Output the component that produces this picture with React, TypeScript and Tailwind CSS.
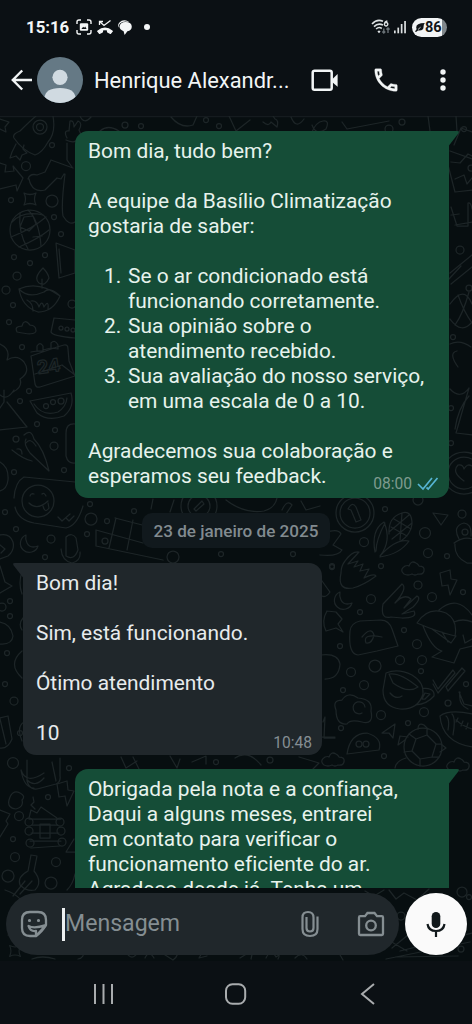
import type { ReactNode } from "react";

function Star({ x, y, s = 1 }: { x: number; y: number; s?: number }) {
  return <path transform={`translate(${x} ${y}) scale(${s})`} d="M-6-6Q0-3 6-6Q3 0 6 6Q0 3-6 6Q-3 0-6-6Z" />;
}
function Cloud({ x, y }: { x: number; y: number }) {
  return <path transform={`translate(${x} ${y})`} d="M-9 5Q-14 1-8-3Q-5-4-4-3Q-2-9 3-6Q5-5 6-3Q12-3 11 2Q10 6 5 5Q2 7-1 5Q-5 7-9 5Z" />;
}
function Moon({ x, y }: { x: number; y: number }) {
  return <path transform={`translate(${x} ${y})`} d="M-3-8A9 9 0 1 0 9 3Q1 6-2 0Q-4-4-3-8Z" />;
}
function Bolt({ x, y }: { x: number; y: number }) {
  return <path transform={`translate(${x} ${y})`} d="M-8-9L2-12L3-3L9-2L2 13L0 3L-6 4Z" />;
}

const bubbles: [number, number, number][] = [
  [52, 145, 2.5], [26, 166, 4.5], [52, 201, 6], [11, 200, 2.5], [54, 217, 2.5], [61, 234, 2.5], [14, 257, 2.5], [45, 255, 2.5],
  [30, 263, 2.5], [17, 276, 4], [6, 290, 4], [13, 305, 2.5], [9, 322, 2.5], [22, 347, 2.5], [72, 304, 4], [29, 391, 2.5],
  [20, 401, 2.5], [37, 424, 2.5], [55, 430, 2.5], [54, 446, 4], [16, 439, 3], [14, 472, 2.5], [64, 470, 2.5],
  [5, 512, 2.5], [90, 504, 2.5], [91, 519, 6], [107, 521, 2.5], [51, 539, 4], [87, 534, 2.5], [16, 529, 2.5], [45, 557, 2.5],
  [2, 607, 4], [10, 601, 2.5], [10, 616, 2.5], [7, 653, 2.5], [5, 684, 2.5], [14, 701, 4], [20, 733, 2.5], [13, 763, 5.5],
  [69, 768, 2.5], [19, 816, 4.5], [48, 797, 2.5], [13, 839, 2.5], [15, 857, 4.5], [8, 876, 6], [51, 883, 6], [56, 862, 4.5],
  [418, 500, 5], [385, 509, 2.5], [462, 514, 4], [425, 533, 5.5], [364, 542, 4.5], [428, 553, 4.5], [447, 556, 2.5], [332, 567, 2.5],
  [381, 566, 2.5], [418, 585, 4], [371, 599, 4.5], [432, 597, 4.5], [463, 592, 2.5], [360, 612, 2.5], [404, 630, 2.5], [417, 644, 4.5],
  [340, 646, 2.5], [351, 672, 4.5], [375, 666, 6], [400, 660, 4.5], [422, 660, 4.5], [421, 671, 2.5], [364, 685, 4.5], [343, 690, 2.5],
  [448, 703, 3], [466, 684, 2.5], [381, 715, 4.5], [424, 712, 4.5], [341, 728, 2.5], [408, 723, 2.5], [384, 756, 2.5],
  [125, 125, 3], [141, 126, 2.5], [206, 120, 2.5], [219, 126, 2.5], [389, 129, 4], [402, 122, 3], [464, 129, 2.5], [471, 168, 3],
  [460, 250, 4], [469, 288, 3], [453, 337, 2.5], [451, 408, 2.5], [451, 443, 2.5], [134, 511, 2.5], [173, 557, 6], [221, 554, 2.5],
  [293, 554, 2.5], [332, 566, 2.5], [216, 762, 2.5], [270, 760, 3], [462, 892, 5], [401, 916, 4], [461, 949, 3], [469, 897, 2.5],
];

function Wallpaper() {
  return (
    <svg className="absolute inset-0 h-[845px] w-[472px]" viewBox="0 116 472 845" fill="none" stroke="#1d2527" strokeWidth="1.25" strokeLinejoin="round" strokeLinecap="round">
      <path d="M0 116.5H472" stroke="#151b1f" />
      {bubbles.map(([x, y, r], i) => <circle key={i} cx={x} cy={y} r={r} />)}
      <path d="M0 119L9 122L5 127L6 132L0 129M53 116Q56 133 48 142Q42 153 35 155Q22 150 14 138Q12 134 20 131Q30 121 36 116" />
      <circle cx="40" cy="127" r="7" /><circle cx="40" cy="127" r="3.5" />
      <path d="M16 144L12 152L10 158L16 156L20 160L22 155L27 153L23 149L24 145M67 138Q63 130 69 131L70 121Q74 120 74 127L78 121Q83 123 79 130L82 137M66 140Q75 144 78 139M67 143V160L72 167" />
      <path d="M0 163L6 165L5 172L14 171L13 166L23 178L17 191L16 185L0 189M28 179Q30 173 37 175L45 172L51 160L73 168M29 179Q32 193 45 190L57 178L61 179L64 174M65 174Q61 206 63 216Q69 226 75 222" />
      <Star x={30} y={199} />
      <circle cx="30" cy="230" r="20" />
      <path d="M12 222Q23 210 43 215M11 237Q32 229 46 217M19 247Q38 239 49 230M20 213Q18 233 28 249M28 210Q39 220 41 246M24 217L33 216L36 224L29 231L20 227ZM33 237L42 236" />
      <path d="M56 243L75 250V273L59 278ZM59 249L61 273M43 268Q33 278 39 283Q45 287 49 278Q48 273 43 268ZM42 279V288M19 289Q38 280 60 296Q53 312 38 312Q22 307 19 289ZM19 289Q28 299 44 292M44 292Q50 286 60 296M27 300Q33 303 33 311M31 301Q37 300 39 307Q42 299 44 307Q49 299 48 309" />
      <path d="M17 332Q14 326 22 326Q24 318 30 325Q36 325 36 331Q35 336 17 332ZM75 320L54 318L51 332Q52 336 75 338" />
      <circle cx="61" cy="328" r="2" /><circle cx="67" cy="329" r="2" /><circle cx="73" cy="330" r="2" />
      <path d="M31 352L37 351M43 350L51 348M57 347L64 345Q68 344 68 349L69 361L75 376L40 387Q36 388 35 384L31 356ZM37 351V346Q40 341 43 346V351ZM51 348V343Q55 339 58 345V349ZM35 374L62 365L75 375" />
      <text x="38" y="374" fontFamily="Inter" fontSize="18" fontWeight="700" transform="rotate(-8 38 374)">24</text>
      <path d="M0 344Q11 349 7 360Q17 354 24 362Q31 372 20 379Q23 387 13 392M0 395Q7 401 14 390M4 390V402L0 408M7 402L27 427L0 430" />
      <path d="M30 401L71 393Q75 407 64 416Q48 422 37 413ZM34 404Q43 417 58 412Q66 407 67 398" />
      <circle cx="46" cy="406" r="2.5" /><circle cx="53" cy="402" r="2.5" /><circle cx="61" cy="401" r="3" />
      <path d="M24 435Q31 428 34 439Q44 449 49 471L30 453Q23 443 26 439M12 450Q23 459 32 461M17 449Q22 448 22 454M26 443Q30 437 36 446M75 424Q66 423 66 433V456Q68 464 75 463" />
      <path d="M0 462Q9 467 8 480Q7 489 0 491M14 498Q15 482 24 477L75 482M15 507Q18 520 34 523L66 528Q77 526 83 506" />
      <circle cx="38" cy="501" r="16" /><path d="M30 496Q31 493 34 494M42 494Q44 492 46 496M29 503Q37 511 48 501M43 506Q45 514 49 508L48 503M58 517L62 521L70 514M66 518L69 521L74 516" />
      <path d="M0 535Q10 533 13 542Q15 550 8 556L0 559M0 545L5 549L1 553M66 537Q72 532 76 538L78 550Q74 561 66 556ZM61 549Q62 561 72 563Q81 561 80 552M0 566L5 582L12 586L0 593" /><Moon x={29} y={543} />
      <path d="M96 530L143 543M116 518L109 548M133 520L127 550M115 518L150 527M96 530L96 546L163 560M151 509L153 499M170 512L174 500" />
      <circle cx="105" cy="541" r="3" /><circle cx="199" cy="506" r="18" /><circle cx="199" cy="506" r="11" /><path d="M194 509L202 501L204 504L196 511ZM226 500Q244 514 264 511Q275 508 277 498M282 510Q287 499 292 505L286 514M301 501L306 510L320 506" />
      <path d="M22 572Q18 583 22 594M23 618Q18 624 22 630M0 622Q11 624 13 636Q12 645 0 644M22 651Q7 664 22 678M0 718L8 716L12 739Q8 749 0 748M0 719L6 744M24 722Q16 727 22 741" />
      <path d="M27 760V781Q30 792 41 788L56 784Q61 782 60 776V758M27 780Q35 788 44 778M21 770Q26 785 44 773M21 770Q24 788 34 788M52 762L56 781M9 800Q12 789 20 793Q26 796 22 800Q24 807 16 809Q7 808 9 800Z" />
      <Bolt x={65} y={793} />
      <path d="M0 810L10 814L6 821L8 824L0 837M33 797L34 802L31 805L35 809M29 818L31 810L37 813L41 807L57 818M29 819H61M32 825H58M31 833H59M30 841H61M31 848L60 846M40 824H50V838H40Z" />
      <circle cx="29" cy="822" r="4" /><circle cx="29" cy="831" r="4" /><circle cx="30" cy="843" r="4" /><circle cx="60" cy="822" r="4" /><circle cx="61" cy="831" r="4" /><circle cx="62" cy="842" r="4" />
      <path d="M74 839L66 852H75M31 855L37 856L34 871Q43 882 35 890Q27 892 20 885Q17 877 28 871ZM25 881L13 896M32 881L20 894M5 890Q24 896 28 915Q25 930 8 935M67 890Q73 884 75 874" />
      <path d="M313 568Q324 584 330 592Q326 598 322 596M325 533Q338 528 341 534L333 545L342 550Q338 557 320 555" />
      <circle cx="355" cy="513" r="19" /><circle cx="355" cy="513" r="15" /><path d="M348 509Q352 501 356 507L361 520L356 522L351 510Z" />
      <path d="M375 552Q371 530 384 522Q392 541 380 556Q396 538 409 541Q400 554 380 557M376 551Q376 540 385 523M389 534Q388 517 402 513Q412 510 412 524Q411 534 401 541M391 527L407 536M394 519L411 529M402 513L400 540M409 515L389 532M412 523L392 539" />
      <path d="M433 513L448 515L441 525ZM459 539Q452 526 464 523Q472 524 471 536M454 543Q464 536 472 539M455 544Q454 557 467 563L472 563" />
      <circle cx="465" cy="532" r="3" /><path d="M341 573Q337 591 353 588Q364 585 376 576Q374 573 364 578L369 569L360 571L363 564L354 567L358 561L348 564L359 552Q352 551 345 561Q341 566 341 573Z" />
      <Cloud x={413} y={569} /><Bolt x={448} y={582} /><Moon x={343} y={600} />
      <path d="M391 617Q380 620 383 604L402 584Q408 588 395 603Q404 593 411 599L404 608L417 596Q422 598 413 607L402 614L414 611Q418 618 402 618Z" />
      <path d="M327 611L336 612L342 619L338 624L343 632L336 628L326 631Q321 621 327 611M350 631Q351 623 360 621L381 620Q389 620 392 629L398 646L377 651L358 655Q348 654 350 631ZM362 637Q371 626 374 635Q372 644 366 643Q362 633 382 637" />
      <path d="M417 623Q428 606 446 613Q458 620 455 636Q438 632 417 623ZM439 610Q457 594 472 615M454 622Q463 618 472 622M423 626Q432 649 442 651L432 657L454 663L460 649L472 646M432 629L451 643L456 636M442 632L448 642M463 635L465 643L472 639" />
      <path d="M386 673Q398 668 412 675Q424 682 423 694Q418 710 400 709Q383 707 383 690ZM389 674Q400 672 418 687Q408 694 393 683ZM423 688Q435 688 434 696Q427 704 416 705M425 693L430 694L425 699L422 699ZM390 693Q396 700 402 696" />
      <path d="M433 680L438 689L453 670L455 673L438 693L433 684M446 687L462 668L465 671L448 691ZM321 655Q338 653 340 664Q339 679 325 679" />
      <path d="M336 710Q332 700 342 700Q348 691 358 698Q373 699 371 711Q374 725 362 722Q350 719 347 724Q336 725 336 710ZM365 707A6 6 0 1 0 362 713M347 754Q350 733 367 733Q383 738 379 750Z" />
      <circle cx="359" cy="744" r="3" /><circle cx="366" cy="744" r="3" /><path d="M323 722L325 717L324 738H335M382 733L395 724L393 738L389 733ZM322 737H335" />
      <Cloud x={333} y={760} /><Cloud x={458} y={765} />
      <circle cx="423" cy="747" r="19" /><path d="M416 739L427 735L436 744L432 757L420 759L412 751ZM427 728L427 735M441 744H436M439 757L432 757M420 766L420 759M404 752L412 751M409 734L416 739M418 729Q418 722 424 725L428 729M405 740L398 745L400 736L408 737M441 744L446 748L440 752M406 758Q396 761 395 768" />
      <path d="M440 716Q449 709 472 714M440 716Q442 742 472 747M446 716Q450 719 448 730M452 714Q456 718 453 735M456 720Q464 727 472 729M458 718L456 722M463 721L461 726M468 723L466 729M459 692L464 704L472 706M460 692Q458 705 468 709" />
      <path d="M451 162L460 163L468 154L472 156M450 151L472 159M454 145L461 128L472 132M428 116L430 131M456 116L457 131M448 165L455 192L472 190M455 179L464 175L467 184L472 178M451 207L457 226H468V203Q471 202 472 209M451 215L459 214M455 225L472 222M450 273L472 255M451 284L472 267M449 279L461 266" />
      <path d="M450 304Q464 284 472 304M450 319Q462 335 472 322M458 295Q464 312 472 323M469 292Q463 314 455 325M450 344Q460 339 471 347M458 367Q448 353 457 351M450 389Q460 400 469 388L456 433L472 435M469 396Q458 408 455 429" />
      <circle cx="464" cy="473" r="21" /><circle cx="464" cy="473" r="16" /><path d="M464 481Q451 472 458 465Q463 464 464 469Q467 463 472 466" />
      <path d="M80 116Q84 125 91 117M171 117Q181 129 193 125L197 116M229 116L236 131L250 120M263 122Q269 127 271 122L277 127Q279 120 275 119L273 116M291 117Q296 130 304 119M312 125Q316 136 326 129Q330 120 323 121Q316 122 312 132M342 122L347 129L389 121M100 131Q108 124 119 131" />
      <path d="M170 756L177 768L180 759M206 764V756L192 762M235 758Q248 749 261 765M299 757L319 763L313 769M121 757L126 768L137 761M133 757L139 769" />
      <path d="M389 890L396 899L404 893L417 900L429 889M365 891L374 896L384 890M400 951L472 933M386 959L470 942M395 957L458 956M390 941L407 951M408 935L392 948M240 958L253 950L251 959M266 958Q271 948 276 957Q281 953 278 959M295 958Q302 951 307 959M336 948L343 960M83 950Q85 958 78 959M126 952Q132 962 138 952M145 958Q149 949 154 958M162 953L173 960Q180 955 175 951M32 959Q42 955 55 959M203 951L199 958L207 956" />
      <Star x={15} y={951} s={0.9} />
    </svg>
  );
}

function StatusBar() {
  return (
    <div className="flex h-[54px] shrink-0 items-center justify-between pl-[26px] pr-[25px]">
      <div className="flex items-center text-[#f4f6f7]">
        <span className="w-[43px] whitespace-nowrap text-[16.8px] font-bold leading-5">15:16</span>
        <svg className="ml-[6px]" width="18" height="18" viewBox="0 0 18 18" fill="none" stroke="currentColor" strokeWidth="1.4">
          <path d="M2 6V4Q2 2 4 2H6M12 2H14Q16 2 16 4V6M16 12V14Q16 16 14 16H12M6 16H4Q2 16 2 14V12" />
          <rect x="4.8" y="5.2" width="8.4" height="7.6" rx="1.2" fill="currentColor" stroke="none" /><path d="M6.4 11L8.2 8.8L9.2 9.8L10.2 8.4L11.6 11Z" fill="#0b1014" stroke="none" />
        </svg>
        <svg className="ml-[3px]" width="18" height="18" viewBox="0 0 18 18" fill="none" stroke="currentColor" strokeWidth="1.3">
          <path d="M3.5 7V3.5H7M3.8 3.8L8 7.4L14.5 2.5" /><path d="M1.7 13.2Q9 7.2 16.3 13.2L14.5 15.3L11.6 13.8V11.9Q9 11.1 6.4 11.9V13.8L3.5 15.3Z" fill="currentColor" strokeLinejoin="round" />
        </svg>
        <svg className="ml-[3px]" width="16" height="17" viewBox="0 0 16 17" fill="currentColor">
          <path d="M1.8 8.4Q0.2 5.8 2.4 3.4Q6 0 11 2.2L12 3.1Q6 1.6 3 4.6Q1.4 6.4 1.8 8.4Z" /><path d="M8.6 3Q14.8 3.2 14.8 7.8Q14.6 11.6 10.4 12.2L7.6 16L6.6 12.2Q2.5 11 2.5 7.6Q3 3.2 8.6 3Z" />
        </svg>
        <span className="ml-[11px] size-[6px] rounded-full bg-current" />
      </div>
      <div className="flex items-center text-[#dce0e2]">
        <svg width="20" height="16" viewBox="0 0 20 16" fill="none" stroke="currentColor" strokeWidth="1.6">
          <path d="M1 5Q6-0.5 12 2.3M3 7.6Q7 3.6 12 6M5.1 10Q8 7.3 10.8 9.5M7 12L8 13L9 12" /><path d="M16.4 2Q13.6 2.5 13.4 5.2A1.7 1.7 0 1 0 14.4 3.7" strokeWidth="1.4" /><path d="M12.8 9.5V14M11.3 12.5L12.8 14L14.3 12.5M17 14V9M15.4 10.5L17 9L18.6 10.5" stroke="#697176" strokeWidth="1.4" />
        </svg>
        <svg className="ml-[3px]" width="12" height="14" viewBox="0 0 12 14" fill="currentColor"><rect y="10.5" width="1.7" height="2.8" /><rect x="3.4" y="7.6" width="1.7" height="5.7" /><rect x="6.8" y="4" width="1.7" height="9.3" /><rect x="10.2" y="1" width="1.7" height="12.3" /></svg>
        <div className="ml-[6px] flex h-[19px] w-[35px] items-center rounded-full bg-linear-to-r from-[#f2f4f5] from-86% to-[#80878b] to-86% pl-[3px] text-[#101417]">
          <svg width="10" height="11" viewBox="0 0 10 11"><path d="M9.8 1Q1 1 1.2 5.5Q1.3 6.5 1.7 7.1L0 9.6L1 10L3 8.5Q8.8 9.2 8.6 4.5Q8.5 2.7 9.8 1Z" fill="currentColor" /><path d="M3 7.5L5.6 5.2" stroke="#eef1f2" strokeWidth="0.8" /></svg>
          <span className="pt-px text-[14.5px] font-bold leading-4">86</span>
        </div>
      </div>
    </div>
  );
}

function Header() {
  return (
    <header className="flex h-[62px] shrink-0 items-center pb-[10px] text-[#f2f5f6]">
      <svg className="ml-[11px]" width="22" height="22" viewBox="0 0 22 22" fill="none" stroke="currentColor" strokeWidth="2.4"><path d="M21 11H2M11.2 1.5L1.8 11L11.2 20.5" /></svg>
      <svg className="ml-[4px]" width="46" height="46" viewBox="0 0 46 46"><defs><clipPath id="face"><circle cx="23" cy="23" r="23" /></clipPath></defs><g clipPath="url(#face)"><rect width="46" height="46" fill="#657985" /><circle cx="23" cy="20.3" r="7.6" fill="#d0dae1" /><path d="M7.5 41Q8 31 23 31Q38 31 38.5 41V46H7.5Z" fill="#d0dae1" /></g></svg>
      <h1 className="ml-[11px] w-[197px] whitespace-nowrap pt-px text-[21.9px] leading-7">Henrique Alexandr...</h1>
      <svg className="ml-[20px]" width="28" height="24" viewBox="0 0 28 24"><rect x="1.7" y="2.7" width="19" height="19" rx="1.8" fill="none" stroke="currentColor" strokeWidth="2.5" /><path d="M20.5 12L26.6 6V18.8L20.5 13.5Z" fill="currentColor" /></svg>
      <svg className="ml-[32px]" width="30" height="30" viewBox="0 0 24 24" fill="currentColor"><path d="M6.54 5c.06.89.21 1.76.45 2.59l-1.2 1.2c-.41-1.2-.67-2.47-.76-3.79h1.51m9.86 12.02c.85.24 1.72.39 2.6.45v1.49c-1.32-.09-2.59-.35-3.8-.75l1.2-1.19M7.5 3H4c-.55 0-1 .45-1 1 0 9.39 7.61 17 17 17 .55 0 1-.45 1-1v-3.49c0-.55-.45-1-1-1-1.24 0-2.45-.2-3.57-.57-.1-.04-.21-.05-.31-.05-.26 0-.51.1-.71.29l-2.2 2.2c-2.83-1.45-5.15-3.76-6.59-6.59l2.2-2.2c.28-.28.36-.67.25-1.02C8.7 6.45 8.5 5.25 8.5 4c0-.55-.45-1-1-1z" stroke="currentColor" strokeWidth="0.25" /></svg>
      <svg className="ml-[39px]" width="6" height="22" viewBox="0 0 6 22" fill="currentColor"><circle cx="3" cy="3" r="2.7" /><circle cx="3" cy="11" r="2.7" /><circle cx="3" cy="19" r="2.7" /></svg>
    </header>
  );
}

function Sent({ children, className = "" }: { children: ReactNode; className?: string }) {
  return (
    <section className={`relative ml-[75px] w-[374px] rounded-b-[13px] rounded-tl-[13px] bg-[#154d37] px-[13px] pt-[8px] text-[#e7f3ed] ${className}`}>
      <svg className="absolute left-[373px] top-0" width="12" height="15" viewBox="0 0 12 15" fill="#154d37"><path d="M0 0H9.2Q12 0 10.3 2.4L1 14.5H0Z" /></svg>
      {children}
    </section>
  );
}

function Chat() {
  return (
    <div className="relative z-10 flex h-[772px] flex-col overflow-hidden whitespace-nowrap pt-[15px] text-[20.9px] leading-[25px] [font-variant-ligatures:none]">
      <Sent className="h-[367px] shrink-0">
        <p>Bom dia, tudo bem?</p>
        <p className="mt-[25px]">A equipe da Basílio Climatização<br />gostaria de saber:</p>
        <ol className="mt-[25px]">
          <li className="flex"><span className="w-[40px] pl-[16px]">1.</span><span>Se o ar condicionado está<br />funcionando corretamente.</span></li>
          <li className="flex"><span className="w-[40px] pl-[16px]">2.</span><span>Sua opinião sobre o<br />atendimento recebido.</span></li>
          <li className="flex"><span className="w-[40px] pl-[16px]">3.</span><span>Sua avaliação do nosso serviço,<br />em uma escala de 0 a 10.</span></li>
        </ol>
        <p className="mt-[25px]">Agradecemos sua colaboração e<br />esperamos seu feedback.</p>
        <div className="absolute bottom-[5px] right-[10px] flex items-center gap-[5px] text-[15.6px] leading-[18px] text-[#7f9b8f]">
          <span>08:00</span>
          <svg width="22" height="14" viewBox="0 0 22 14" fill="none" stroke="#56b4d3" strokeWidth="1.7"><path d="M1 7L6 12L15 1M9.5 10.5L11.2 12L20.5 1" /></svg>
        </div>
      </Sent>
      <time className="ml-[142px] mt-[15px] flex h-[35px] w-[188px] shrink-0 items-center justify-center rounded-[10px] bg-[#11191d] pt-px text-[17.1px] font-medium leading-5 text-[#828b90]">23 de janeiro de 2025</time>
      <section className="relative ml-[23px] mt-[15px] h-[192px] w-[299px] shrink-0 rounded-b-[13px] rounded-tr-[13px] bg-[#20272b] px-[13px] pt-[8px] text-[#e7ebed]">
        <svg className="absolute right-[298px] top-0" width="12" height="15" viewBox="0 0 12 15" fill="#20272b"><path d="M12 0H2.8Q0 0 1.7 2.4L11 14.5H12Z" /></svg>
        <p>Bom dia!</p>
        <p className="mt-[25px]">Sim, está funcionando.</p>
        <p className="mt-[25px]">Ótimo atendimento</p>
        <p className="mt-[25px]">10</p>
        <span className="absolute bottom-[3px] right-[10px] text-[15.6px] leading-[18px] text-[#858e93]">10:48</span>
      </section>
      <Sent className="mt-[14px] h-[150px] shrink-0">
        <p>Obrigada pela nota e a confiança,<br />Daqui a alguns meses, entrarei<br />em contato para verificar o<br />funcionamento eficiente do ar.<br />Agradeço desde já. Tenha um</p>
      </Sent>
    </div>
  );
}

function Composer() {
  return (
    <div className="relative z-10 flex h-[73px] items-start gap-[6px] pl-[6px] pt-[5px]">
      <div className="flex h-[62px] w-[393px] items-center rounded-full bg-[#20272b] text-[#858e92]">
        <svg className="ml-[14px]" width="28" height="28" viewBox="0 0 28 28" fill="none" stroke="currentColor" strokeWidth="2.3" strokeLinecap="round" strokeLinejoin="round"><path d="M26 14V10Q26 2 18 2H10Q2 2 2 10V18Q2 26 10 26H16Q22 22 26 15Z" /><path d="M8.5 16Q14 19 25.8 15.2L16 26V21Q10.5 22 8.5 16Z" /><circle cx="9.5" cy="10.5" r="1" fill="currentColor" strokeWidth="1.2" /><circle cx="18.5" cy="10.5" r="1" fill="currentColor" strokeWidth="1.2" /></svg>
        <span className="ml-[14px] h-[33px] w-[3px] bg-[#edf0f1]" />
        <span className="w-[235px] whitespace-nowrap text-[23.1px] leading-7">Mensagem</span>
        <svg width="20" height="28" viewBox="0 0 20 28" fill="none" stroke="currentColor" strokeWidth="2.2"><path d="M17.5 6.5V19Q17.5 26 10 26Q2.5 26 2.5 19V7.5Q2.5 2 8 2Q13.5 2 13.5 7.5V18Q13.5 21.5 10 21.5Q6.5 21.5 6.5 18V7" /></svg>
        <svg className="ml-[37px]" width="28" height="26" viewBox="0 0 28 26" fill="none" stroke="currentColor" strokeWidth="2.3"><path d="M3.2 5.2H8L10.5 2H17.5L20 5.2H24.8Q26 5.2 26 6.4V22.8Q26 24 24.8 24H3.2Q2 24 2 22.8V6.4Q2 5.2 3.2 5.2Z" /><circle cx="14" cy="14.5" r="4.8" /></svg>
      </div>
      <button className="flex size-[62px] items-center justify-center rounded-full bg-[#fafafa] text-[#11181b]" aria-label="Gravar áudio">
        <svg width="20" height="27" viewBox="0 0 20 27" fill="none" stroke="currentColor" strokeWidth="2.2"><rect x="5.7" y="1" width="8.6" height="16" rx="4.3" fill="currentColor" stroke="none" /><path d="M1.5 13Q2.5 20 10 20Q17.5 20 18.5 13M10 20V26" /></svg>
      </button>
    </div>
  );
}

function Navigation() {
  return (
    <nav className="flex h-[63px] shrink-0 items-start pt-[22px] text-[#a9acae]">
      <svg className="ml-[93px]" width="22" height="22" viewBox="0 0 22 22" fill="none" stroke="currentColor" strokeWidth="2"><path d="M2 1V21M10.5 1V21M19 1V21" /></svg>
      <svg className="ml-[109px]" width="24" height="22" viewBox="0 0 24 22" fill="none" stroke="currentColor" strokeWidth="2"><rect x="2" y="1.2" width="19.2" height="19.6" rx="6.5" /></svg>
      <svg className="ml-[112px]" width="16" height="22" viewBox="0 0 16 22" fill="none" stroke="currentColor" strokeWidth="2"><path d="M14 1L2 11L14 21" /></svg>
    </nav>
  );
}

export default function App() {
  return (
    <div className="flex h-[1024px] w-[472px] flex-col overflow-hidden bg-[#0b1014] font-['Roboto',sans-serif]">
      <StatusBar />
      <Header />
      <main className="relative h-[845px] shrink-0 bg-[#070e10]">
        <Wallpaper />
        <Chat />
        <Composer />
      </main>
      <Navigation />
    </div>
  );
}
